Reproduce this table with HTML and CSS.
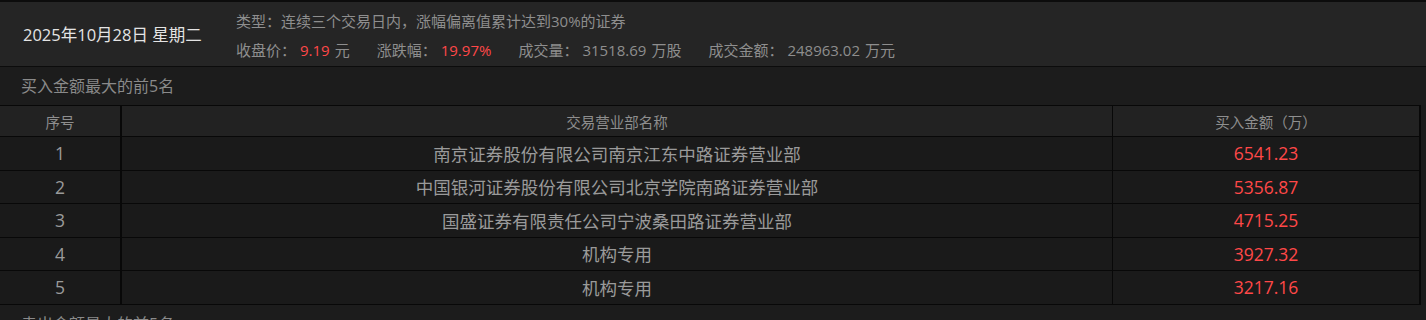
FILE: index.html
```html
<!DOCTYPE html>
<html lang="zh-CN">
<head>
<meta charset="utf-8">
<title>龙虎榜</title>
<link rel="stylesheet" href="styles.css">
</head>
<body>
<div class="page">
  <header class="summary">
    <div class="date">2025年10月28日 星期二</div>
    <div class="info">
      <div class="line">类型：连续三个交易日内，涨幅偏离值累计达到30%的证券</div>
      <div class="line stats">
        <span class="stat"><span class="lbl">收盘价：</span><span class="red">9.19</span><span class="unit">元</span></span>
        <span class="stat"><span class="lbl">涨跌幅：</span><span class="red">19.97%</span></span>
        <span class="stat"><span class="lbl">成交量：</span>31518.69<span class="unit">万股</span></span>
        <span class="stat"><span class="lbl">成交金额：</span>248963.02<span class="unit">万元</span></span>
      </div>
    </div>
  </header>

  <div class="section-title">买入金额最大的前5名</div>
  <div class="table">
    <div class="row head">
      <div class="c1">序号</div><div class="c2">交易营业部名称</div><div class="c3">买入金额（万）</div>
    </div>
    <div class="row"><div class="c1">1</div><div class="c2">南京证券股份有限公司南京江东中路证券营业部</div><div class="c3 red">6541.23</div></div>
    <div class="row"><div class="c1">2</div><div class="c2">中国银河证券股份有限公司北京学院南路证券营业部</div><div class="c3 red">5356.87</div></div>
    <div class="row"><div class="c1">3</div><div class="c2">国盛证券有限责任公司宁波桑田路证券营业部</div><div class="c3 red">4715.25</div></div>
    <div class="row"><div class="c1">4</div><div class="c2">机构专用</div><div class="c3 red">3927.32</div></div>
    <div class="row"><div class="c1">5</div><div class="c2">机构专用</div><div class="c3 red">3217.16</div></div>
  </div>
  <div class="section-title">卖出金额最大的前5名</div>
</div>
</body>
</html>
```

FILE: styles.css
```css
* { box-sizing: border-box; }
html, body { margin: 0; padding: 0; }
body {
  background: #1b1b1b;
  font-family: "Open Sans", "Noto Sans CJK SC", sans-serif;
  color: #8e8e8e;
  overflow: hidden;
}
.page { width: 1426px; }

.summary {
  display: flex;
  height: 67px;
  background: #252525;
  border-top: 2px solid #0c0c0c;
  border-bottom: 1px solid #0c0c0c;
}
.date {
  width: 236px;
  padding-left: 23px;
  font-size: 16.5px;
  color: #e4e4e4;
  display: flex;
  align-items: center;
}
.info {
  padding-top: 5px;
  font-size: 15px;
}
.line { line-height: 29px; white-space: nowrap; }
.stats { display: flex; gap: 27px; }
.lbl { margin-right: 4px; }
.unit { margin-left: 5px; }
.red { color: #ff4848; }

.section-title {
  height: 38px;
  line-height: 38px;
  padding-left: 21px;
  font-size: 16px;
  color: #8a8a8a;
  background: #1c1c1c;
}

.table {
  width: 1421px;
  border-top: 1px solid #080808;
  border-right: 2px solid #080808;
}
.row {
  display: grid;
  grid-template-columns: 122px 991px 1fr;
  height: 33.5px;
  border-bottom: 1px solid #080808;
  background: #1a1a1a;
  font-size: 17.5px;
  color: #9a9a9a;
}
.row.head {
  height: 31px;
  background: #222222;
  font-size: 14.5px;
  color: #8e8e8e;
}
.row > div {
  display: flex;
  align-items: center;
  justify-content: center;
  white-space: nowrap;
}
.c1 { border-right: 2px solid #080808; }
.c2 { border-right: 1px solid #080808; }
.row .c3.red { color: #ff4848; }
```
